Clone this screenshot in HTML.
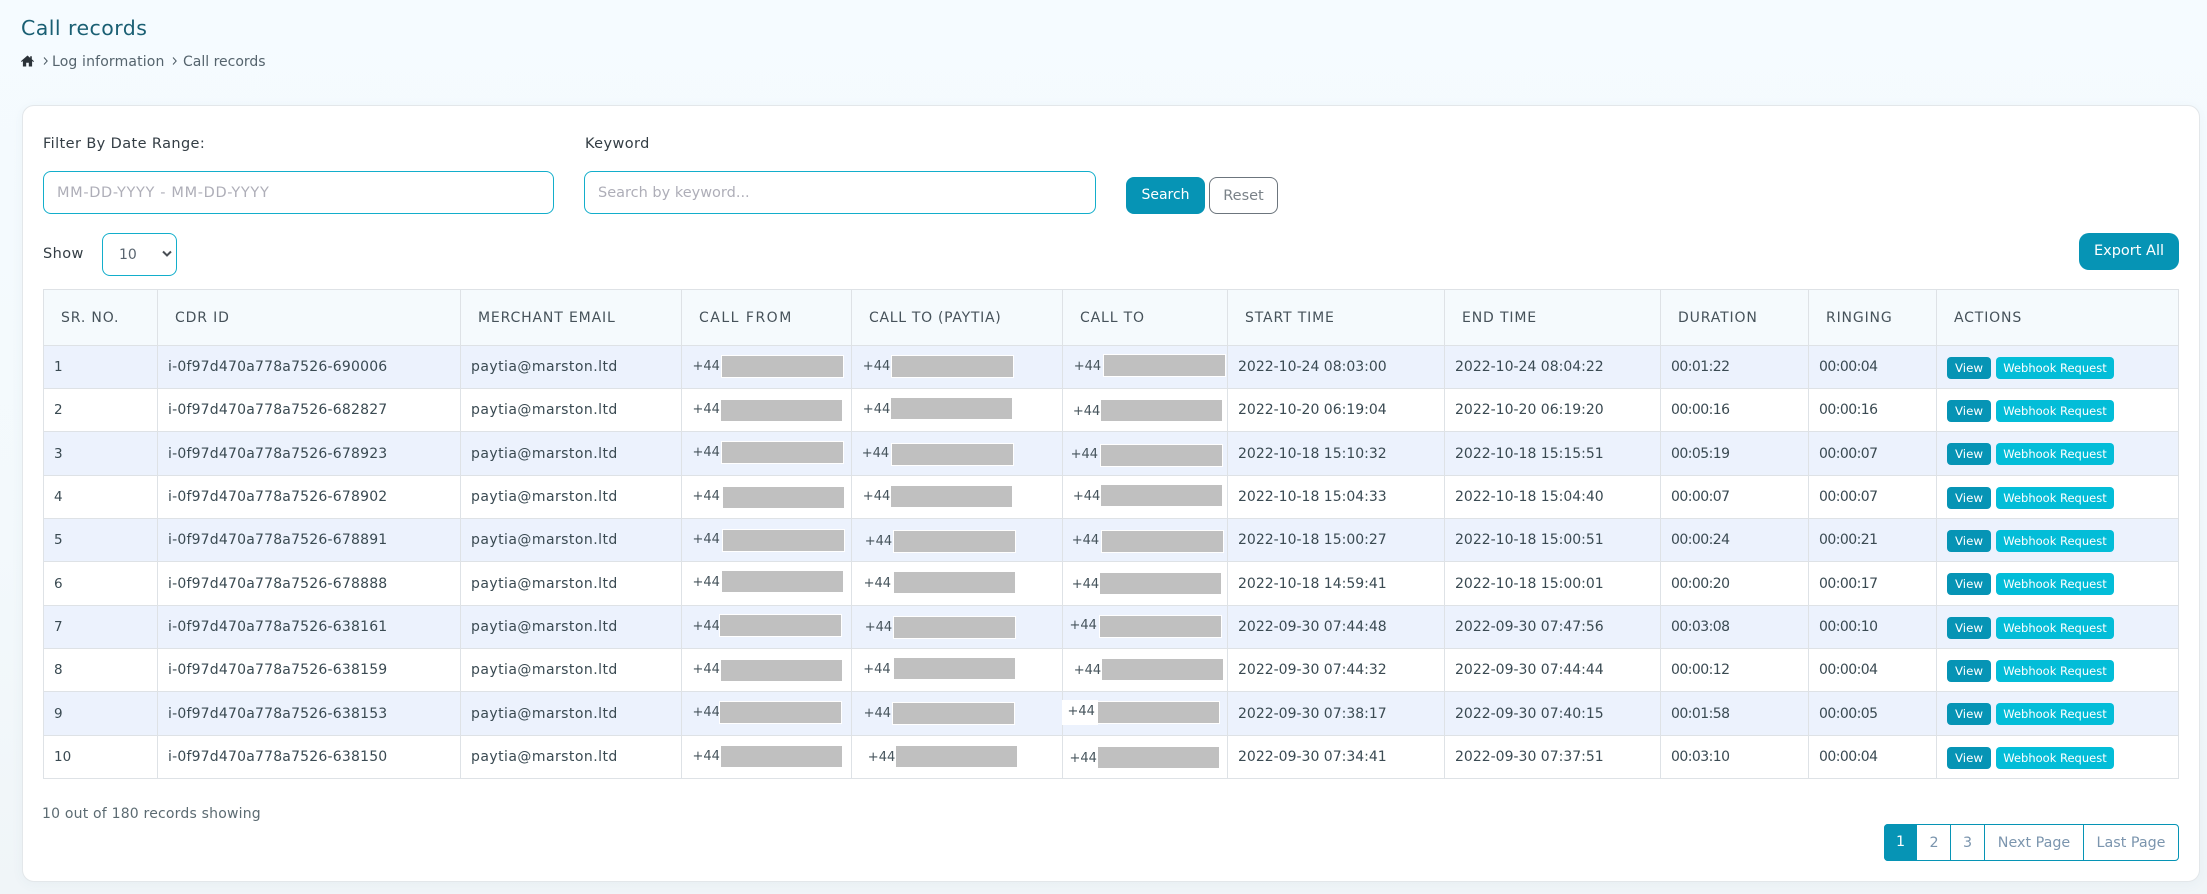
<!DOCTYPE html>
<html><head><meta charset="utf-8"><title>Call records</title>
<style>
html,body{margin:0;padding:0;width:2207px;height:894px;overflow:hidden}
body{position:relative;background:linear-gradient(180deg,#f5fbff 0%,#f3f9fc 60%,#f0f5f8 100%);font-family:"DejaVu Sans","Liberation Sans",sans-serif;color:#3a4a52;font-size:13px}
.a{position:absolute;white-space:nowrap}
.l{font-size:14.5px;letter-spacing:.4px}
#card{position:absolute;left:22px;top:105px;width:2176px;height:775px;background:#fff;border:1px solid #e3e7ea;border-radius:12px;box-shadow:0 2px 12px rgba(60,90,110,.05)}
.inp{position:absolute;box-sizing:border-box;border:1px solid #13aecb;border-radius:8px;background:#fff}
.btn{position:absolute;box-sizing:border-box;background:#0694b5;color:#fff;border-radius:8px;text-align:center;font-size:14.5px}
table{position:absolute;left:43px;top:289px;width:2135px;border-collapse:collapse;table-layout:fixed}
th,td{border:1px solid #dee2e6;padding:0 0 0 10px;text-align:left;white-space:nowrap;overflow:hidden;font-weight:normal;font-size:14px;color:#3a4a52}
th{padding-left:17px;height:55px;background:#f5fafd;font-size:14px;letter-spacing:.85px;color:#46525a}
th:nth-child(4){letter-spacing:1.5px}
th:nth-child(5){letter-spacing:.7px}
tbody tr:nth-child(odd) td{background:#ecf2fd}
td:nth-child(1){font-size:13.5px}
td:nth-child(2){letter-spacing:.2px}
td:nth-child(3){letter-spacing:.45px}
td:nth-child(9),td:nth-child(10){letter-spacing:-.55px}
td.g{padding:0}
.v,.w{display:inline-block;box-sizing:border-box;height:22px;line-height:22px;border-radius:4px;color:#fff;text-align:center;vertical-align:top;margin-top:1px;letter-spacing:0}
.v{width:44px;background:#0694b5;font-size:11.8px}
.w{width:118px;background:#03bdd8;margin-left:5px;font-size:11.5px}
.r{position:absolute;width:121px;height:21px;background:#c0c0c0}
.o{outline:1px solid #fff}
.p{position:absolute;height:20px;line-height:20px;font-size:13px;color:#46545c}
#pg{position:absolute;left:1884px;top:824px;width:295px;height:37px;box-sizing:border-box;border:1px solid #0694b5;border-radius:4px;background:#fff}
#pg div{position:absolute;top:0;height:35px;line-height:36px;text-align:center;color:#7b95ae;font-size:14.3px;border-left:1px solid #0694b5;box-sizing:border-box}
</style></head><body>
<div class="a" style="left:21px;top:16px;font-size:20.5px;letter-spacing:.45px;line-height:24px;color:#1a5f73">Call records</div>
<svg class="a" style="left:21px;top:55px" width="13" height="12" viewBox="0 0 13 12"><path d="M6.5 0.5 L1 5.2 L0 6.2 L0.7 7 L1.9 6 V11.5 H5.2 V7.8 H7.8 V11.5 H11.1 V6 L12.3 7 L13 6.2 L10.8 4.3 V1.2 H9.2 V2.9 Z" fill="#2b3238"/></svg>
<svg class="a" style="left:43px;top:57px" width="5" height="8" viewBox="0 0 5 8"><path d="M1 .5 L4.2 4 L1 7.5" fill="none" stroke="#4b5a63" stroke-width="1"/></svg>
<div class="a" style="left:52px;top:52px;font-size:14px;letter-spacing:.15px;line-height:20px;color:#55646d">Log information</div>
<svg class="a" style="left:172px;top:57px" width="5" height="8" viewBox="0 0 5 8"><path d="M1 .5 L4.2 4 L1 7.5" fill="none" stroke="#4b5a63" stroke-width="1"/></svg>
<div class="a" style="left:183px;top:52px;font-size:14px;line-height:20px;color:#55646d">Call records</div>

<div id="card"></div>

<div class="a l" style="left:43px;top:134px;line-height:20px;color:#333d44">Filter By Date Range:</div>
<div class="a l" style="left:585px;top:134px;line-height:20px;color:#333d44">Keyword</div>
<div class="inp" style="left:43px;top:171px;width:511px;height:43px"></div>
<div class="a" style="left:57px;top:183px;font-size:14.5px;letter-spacing:.65px;line-height:20px;color:#aeaeb8">MM-DD-YYYY - MM-DD-YYYY</div>
<div class="inp" style="left:584px;top:171px;width:512px;height:43px"></div>
<div class="a" style="left:598px;top:183px;font-size:14.5px;line-height:20px;color:#aeaeb8">Search by keyword...</div>
<div class="btn" style="left:1126px;top:177px;width:79px;height:37px;line-height:37px;font-size:14px">Search</div>
<div class="btn" style="left:1209px;top:177px;width:69px;height:37px;line-height:36px;background:#fff;border:1px solid #6c757d;color:#7a8288">Reset</div>

<div class="a l" style="left:43px;top:244px;line-height:20px;color:#333d44">Show</div>
<div class="inp" style="left:102px;top:233px;width:75px;height:43px"></div>
<div class="a" style="left:119px;top:245px;font-size:14px;line-height:20px;color:#5a6570">10</div>
<svg class="a" style="left:162px;top:250px" width="10" height="8" viewBox="0 0 10 8"><path d="M1 1.5 L5 5.5 L9 1.5" fill="none" stroke="#4a4f55" stroke-width="2"/></svg>
<div class="btn" style="left:2079px;top:233px;width:100px;height:37px;line-height:37px;border-radius:10px">Export All</div>

<table>
<colgroup><col style="width:114px"><col style="width:303px"><col style="width:221px"><col style="width:170px"><col style="width:211px"><col style="width:165px"><col style="width:217px"><col style="width:216px"><col style="width:148px"><col style="width:128px"><col style="width:242px"></colgroup>
<thead><tr><th>SR. NO.</th><th>CDR ID</th><th>MERCHANT EMAIL</th><th>CALL FROM</th><th>CALL TO (PAYTIA)</th><th>CALL TO</th><th>START TIME</th><th>END TIME</th><th>DURATION</th><th>RINGING</th><th>ACTIONS</th></tr></thead>
<tbody>
<tr style="height:43px"><td>1</td><td>i-0f97d470a778a7526-690006</td><td>paytia@marston.ltd</td><td class="g"></td><td class="g"></td><td class="g"></td><td>2022-10-24 08:03:00</td><td>2022-10-24 08:04:22</td><td>00:01:22</td><td>00:00:04</td><td><span class="v">View</span><span class="w">Webhook Request</span></td></tr>
<tr style="height:43px"><td>2</td><td>i-0f97d470a778a7526-682827</td><td>paytia@marston.ltd</td><td class="g"></td><td class="g"></td><td class="g"></td><td>2022-10-20 06:19:04</td><td>2022-10-20 06:19:20</td><td>00:00:16</td><td>00:00:16</td><td><span class="v">View</span><span class="w">Webhook Request</span></td></tr>
<tr style="height:44px"><td>3</td><td>i-0f97d470a778a7526-678923</td><td>paytia@marston.ltd</td><td class="g"></td><td class="g"></td><td class="g"></td><td>2022-10-18 15:10:32</td><td>2022-10-18 15:15:51</td><td>00:05:19</td><td>00:00:07</td><td><span class="v">View</span><span class="w">Webhook Request</span></td></tr>
<tr style="height:43px"><td>4</td><td>i-0f97d470a778a7526-678902</td><td>paytia@marston.ltd</td><td class="g"></td><td class="g"></td><td class="g"></td><td>2022-10-18 15:04:33</td><td>2022-10-18 15:04:40</td><td>00:00:07</td><td>00:00:07</td><td><span class="v">View</span><span class="w">Webhook Request</span></td></tr>
<tr style="height:43px"><td>5</td><td>i-0f97d470a778a7526-678891</td><td>paytia@marston.ltd</td><td class="g"></td><td class="g"></td><td class="g"></td><td>2022-10-18 15:00:27</td><td>2022-10-18 15:00:51</td><td>00:00:24</td><td>00:00:21</td><td><span class="v">View</span><span class="w">Webhook Request</span></td></tr>
<tr style="height:44px"><td>6</td><td>i-0f97d470a778a7526-678888</td><td>paytia@marston.ltd</td><td class="g"></td><td class="g"></td><td class="g"></td><td>2022-10-18 14:59:41</td><td>2022-10-18 15:00:01</td><td>00:00:20</td><td>00:00:17</td><td><span class="v">View</span><span class="w">Webhook Request</span></td></tr>
<tr style="height:43px"><td>7</td><td>i-0f97d470a778a7526-638161</td><td>paytia@marston.ltd</td><td class="g"></td><td class="g"></td><td class="g"></td><td>2022-09-30 07:44:48</td><td>2022-09-30 07:47:56</td><td>00:03:08</td><td>00:00:10</td><td><span class="v">View</span><span class="w">Webhook Request</span></td></tr>
<tr style="height:43px"><td>8</td><td>i-0f97d470a778a7526-638159</td><td>paytia@marston.ltd</td><td class="g"></td><td class="g"></td><td class="g"></td><td>2022-09-30 07:44:32</td><td>2022-09-30 07:44:44</td><td>00:00:12</td><td>00:00:04</td><td><span class="v">View</span><span class="w">Webhook Request</span></td></tr>
<tr style="height:44px"><td>9</td><td>i-0f97d470a778a7526-638153</td><td>paytia@marston.ltd</td><td class="g"></td><td class="g"></td><td class="g"></td><td>2022-09-30 07:38:17</td><td>2022-09-30 07:40:15</td><td>00:01:58</td><td>00:00:05</td><td><span class="v">View</span><span class="w">Webhook Request</span></td></tr>
<tr style="height:43px"><td>10</td><td>i-0f97d470a778a7526-638150</td><td>paytia@marston.ltd</td><td class="g"></td><td class="g"></td><td class="g"></td><td>2022-09-30 07:34:41</td><td>2022-09-30 07:37:51</td><td>00:03:10</td><td>00:00:04</td><td><span class="v">View</span><span class="w">Webhook Request</span></td></tr>
</tbody></table>

<div class="a" style="left:1062px;top:700px;width:36px;height:25px;background:#fff"></div>

<!-- call from -->
<span class="p" style="left:692.5px;top:357px">+44</span><div class="r o" style="left:722px;top:356px"></div>
<span class="p" style="left:692.5px;top:400px">+44</span><div class="r" style="left:721px;top:400px"></div>
<span class="p" style="left:692.5px;top:443px">+44</span><div class="r o" style="left:722px;top:442px"></div>
<span class="p" style="left:692.5px;top:487px">+44</span><div class="r" style="left:723px;top:487px"></div>
<span class="p" style="left:692.5px;top:530px">+44</span><div class="r o" style="left:723px;top:530px"></div>
<span class="p" style="left:692.5px;top:573px">+44</span><div class="r" style="left:722px;top:571px"></div>
<span class="p" style="left:692.5px;top:617px">+44</span><div class="r o" style="left:720px;top:615px"></div>
<span class="p" style="left:692.5px;top:660px">+44</span><div class="r" style="left:721px;top:660px"></div>
<span class="p" style="left:692.5px;top:703px">+44</span><div class="r o" style="left:720px;top:702px"></div>
<span class="p" style="left:692.5px;top:747px">+44</span><div class="r" style="left:721px;top:746px"></div>
<!-- call to paytia -->
<span class="p" style="left:862.8px;top:357px">+44</span><div class="r o" style="left:892px;top:356px"></div>
<span class="p" style="left:862.8px;top:400px">+44</span><div class="r" style="left:891px;top:398px"></div>
<span class="p" style="left:861.7px;top:444px">+44</span><div class="r o" style="left:892px;top:444px"></div>
<span class="p" style="left:862.8px;top:487px">+44</span><div class="r" style="left:891px;top:486px"></div>
<span class="p" style="left:864.7px;top:532px">+44</span><div class="r o" style="left:894px;top:531px"></div>
<span class="p" style="left:863.6px;top:574px">+44</span><div class="r" style="left:894px;top:572px"></div>
<span class="p" style="left:864.7px;top:618px">+44</span><div class="r o" style="left:894px;top:617px"></div>
<span class="p" style="left:863.2px;top:660px">+44</span><div class="r" style="left:894px;top:658px"></div>
<span class="p" style="left:863.6px;top:704px">+44</span><div class="r o" style="left:893px;top:703px"></div>
<span class="p" style="left:867.8px;top:748px">+44</span><div class="r" style="left:896px;top:746px"></div>
<!-- call to -->
<span class="p" style="left:1073.7px;top:357px">+44</span><div class="r o" style="left:1104px;top:355px"></div>
<span class="p" style="left:1072.9px;top:402px">+44</span><div class="r" style="left:1101px;top:400px"></div>
<span class="p" style="left:1070.6px;top:445px">+44</span><div class="r o" style="left:1101px;top:445px"></div>
<span class="p" style="left:1072.9px;top:487px">+44</span><div class="r" style="left:1101px;top:485px"></div>
<span class="p" style="left:1071.7px;top:531px">+44</span><div class="r o" style="left:1102px;top:531px"></div>
<span class="p" style="left:1071.7px;top:575px">+44</span><div class="r" style="left:1100px;top:573px"></div>
<span class="p" style="left:1069.5px;top:616px">+44</span><div class="r o" style="left:1100px;top:616px"></div>
<span class="p" style="left:1073.7px;top:661px">+44</span><div class="r" style="left:1102px;top:659px"></div>
<span class="p" style="left:1067.5px;top:702px">+44</span><div class="r o" style="left:1098px;top:702px"></div>
<span class="p" style="left:1069.5px;top:749px">+44</span><div class="r" style="left:1098px;top:747px"></div>

<div class="a" style="left:42px;top:804px;font-size:14px;letter-spacing:.2px;line-height:20px;color:#5c6b72">10 out of 180 records showing</div>

<div id="pg">
<div style="left:-1px;top:-1px;width:33px;height:37px;line-height:37px;background:#0694b5;color:#fff;border:0;border-radius:4px 0 0 4px">1</div>
<div style="left:31px;width:35px">2</div>
<div style="left:65px;width:34px">3</div>
<div style="left:99px;width:99px">Next Page</div>
<div style="left:198px;width:95px">Last Page</div>
</div>
</body></html>
